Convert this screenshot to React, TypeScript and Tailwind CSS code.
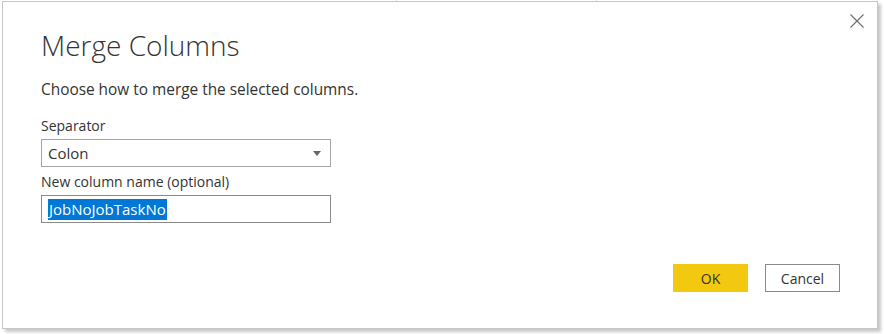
import React from 'react';

const font = { fontFamily: '"Segoe UI", "Open Sans", "Noto Sans", sans-serif' };

function Field({ label, children }: { label: string; children: React.ReactNode }) {
  return (
    <div className="flex flex-col">
      <div className="text-[14px] leading-[19px] text-[#333]">{label}</div>
      <div className="mt-[4px]">{children}</div>
    </div>
  );
}

export default function App() {
  return (
    <div
      className="relative h-[334px] w-[884px] overflow-hidden bg-white bg-[linear-gradient(to_bottom,transparent_27px,#d9d9d9_27px,#d9d9d9_28px)] bg-[length:100%_26.2px] bg-[position:0_1px]"
      style={font}
    >
      {/* grid column dividers above the dialog */}
      <div className="absolute left-[396px] top-0 h-[2px] w-px bg-[#d9d9d9]" />
      <div className="absolute left-[596px] top-0 h-[2px] w-px bg-[#d9d9d9]" />

      {/* dialog */}
      <div className="absolute left-[2px] top-[1px] flex h-[328px] w-[876px] flex-col border border-[#c6c6c6] bg-white pl-[38px] pr-[37px] shadow-[3px_3px_3px_rgba(0,0,0,0.22)]">
        <button className="absolute right-[12px] top-[11px] flex h-[16px] w-[16px] items-center justify-center">
          <svg width="14" height="14" viewBox="0 0 14 14" fill="none" stroke="#6d6d6d" strokeWidth="1.1">
            <path d="M0.5 0.5 L13.5 13.5 M13.5 0.5 L0.5 13.5" />
          </svg>
        </button>

        <h1 className="mt-[25px] text-[28px] font-light leading-[36px] text-[#333]">Merge Columns</h1>
        <p className="mt-[17px] text-[15.4px] leading-[20px] text-[#333]">Choose how to merge the selected columns.</p>

        <div className="mt-[16px] flex flex-col gap-[5px]">
          <Field label="Separator">
            <div className="flex h-[28px] w-[290px] items-center justify-between border border-[#a6a6a6] pl-[6px] pr-[9px] text-[15px] text-[#333]">
              <span>Colon</span>
              <svg width="8" height="5" viewBox="0 0 8 5">
                <path d="M0 0 H8 L4 5 Z" fill="#666" />
              </svg>
            </div>
          </Field>
          <Field label="New column name (optional)">
            <div className="flex h-[28px] w-[290px] items-center border border-[#8a8a8a] pl-[6px] text-[15px]">
              <span className="bg-[#0078d7] px-px leading-[21px] text-white">JobNoJobTaskNo</span>
            </div>
          </Field>
        </div>

        <div className="mt-auto mb-[36px] flex justify-end gap-[17px]">
          <button className="h-[28px] w-[75px] bg-[#f2c811] text-[14px] text-[#333]">OK</button>
          <button className="h-[28px] w-[75px] border border-[#8a8a8a] bg-white text-[14px] text-[#333]">Cancel</button>
        </div>
      </div>
    </div>
  );
}
